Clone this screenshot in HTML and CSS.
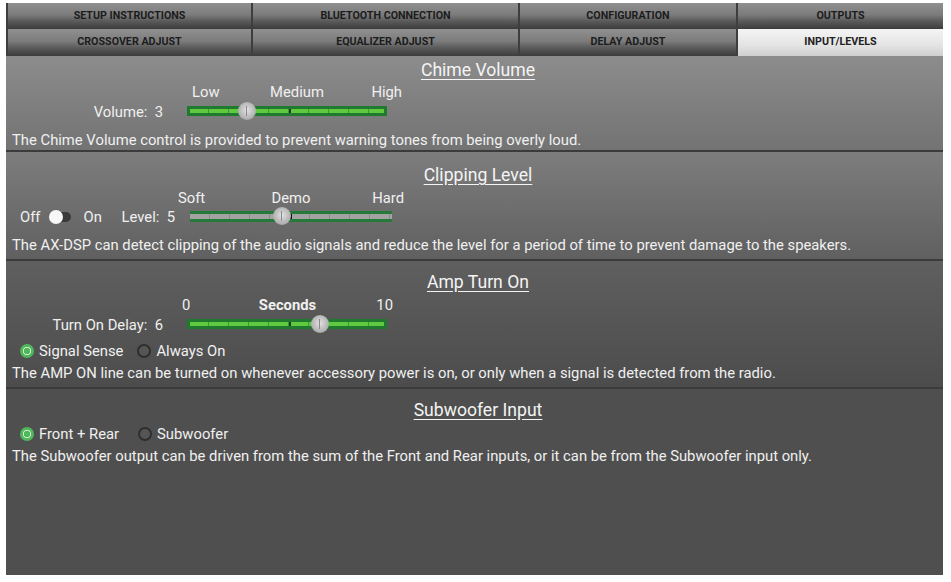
FILE: index.html
```html
<!DOCTYPE html>
<html>
  <head>
    <title>AX-DSP - Input/Levels</title>
    <link rel="stylesheet" href="styles.css">
  </head>
  <body>
    <div class="panel">

      <!--TABS-->
      <div class="tabs">
        <div class="tab">SETUP INSTRUCTIONS</div>
        <div class="tab">BLUETOOTH CONNECTION</div>
        <div class="tab">CONFIGURATION</div>
        <div class="tab">OUTPUTS</div>
        <div class="tab">CROSSOVER ADJUST</div>
        <div class="tab">EQUALIZER ADJUST</div>
        <div class="tab">DELAY ADJUST</div>
        <div class="tab tabActive">INPUT/LEVELS</div>
      </div>

      <!--CHIME VOLUME-->
      <section class="block chimeBlock">
        <h2 class="heading">Chime Volume</h2>
        <div class="ctl">
          <div></div>
          <div class="scale scaleChime"><span>Low</span><span>Medium</span><span>High</span></div>
          <div class="ctlLabel">Volume:&nbsp; 3</div>
          <div class="slider"><div class="thumb" style="left: 29.5%"></div></div>
        </div>
        <p class="desc">The Chime Volume control is provided to prevent warning tones from being overly loud.</p>
      </section>

      <!--CLIPPING LEVEL-->
      <section class="block clipBlock">
        <h2 class="heading">Clipping Level</h2>
        <div class="ctl ctlClip">
          <div></div>
          <div class="scale scaleClip"><span>Soft</span><span>Demo</span><span>Hard</span></div>
          <div class="clipLabel">
            <span>Off</span>
            <span class="toggle"><span class="knob"></span></span>
            <span class="onText">On</span>
            <span class="levelText">Level:&nbsp; 5</span>
          </div>
          <div class="slider sliderOff"><div class="thumb" style="left: 45.5%"></div></div>
        </div>
        <p class="desc">The AX-DSP can detect clipping of the audio signals and reduce the level for a period of time to prevent damage to the speakers.</p>
      </section>

      <!--AMP TURN ON-->
      <section class="block ampBlock">
        <h2 class="heading">Amp Turn On</h2>
        <div class="ctl">
          <div></div>
          <div class="scale scaleAmp"><span>0</span><span class="bold">Seconds</span><span>10</span></div>
          <div class="ctlLabel">Turn On Delay:&nbsp; 6</div>
          <div class="slider"><div class="thumb" style="left: 67%"></div></div>
        </div>
        <div class="radios">
          <label class="radio"><span class="dot checked"></span>Signal Sense</label>
          <label class="radio"><span class="dot"></span>Always On</label>
        </div>
        <p class="desc descAmp">The AMP ON line can be turned on whenever accessory power is on, or only when a signal is detected from the radio.</p>
      </section>

      <!--SUBWOOFER INPUT-->
      <section class="block subBlock">
        <h2 class="heading">Subwoofer Input</h2>
        <div class="radios radiosSub">
          <label class="radio"><span class="dot checked"></span>Front + Rear</label>
          <label class="radio"><span class="dot"></span>Subwoofer</label>
        </div>
        <p class="desc descAmp">The Subwoofer output can be driven from the sum of the Front and Rear inputs, or it can be from the Subwoofer input only.</p>
      </section>

    </div>
  </body>
</html>
```

FILE: styles.css
```css
body{
  margin: 0;
  background-color: white;
  font-family: Roboto, "Liberation Sans", sans-serif;
  color: #f0f0f0;
}

.panel{
  width: 937px;
  height: 572px;
  margin: 3px 0 0 6px;
  background-color: #4f4f4f;
  display: flex;
  flex-direction: column;
}

/* Tabs on top */
.tabs{
  display: grid;
  grid-template-columns: 245px 267px 218px 207px;
}

.tab{
  height: 26px;
  line-height: 26px;
  text-align: center;
  font-size: 10.7px;
  font-weight: bold;
  color: #1c1c1c;
  background: linear-gradient(#909090, #7c7c7c 45%, #5a5a5a 70%, #3c3c3c);
  border-left: 2px solid #3e3e3e;
  box-sizing: border-box;
}

.tab:nth-child(n+5){
  height: 27px;
}

.tabActive{
  background: linear-gradient(#f4f4f4, #e4e4e4 60%, #cfcfcf);
  color: #222;
}

/* Sections */
.block{
  padding-left: 7px;
  box-sizing: border-box;
  border-bottom: 2px solid #3b3b3b;
}

.chimeBlock{
  height: 96px;
  padding-top: 4px;
  background: linear-gradient(#8c8c8c, #737373);
}

.clipBlock{
  height: 109px;
  padding-top: 13px;
  background: linear-gradient(#7d7d7d, #606060);
}

.ampBlock{
  height: 128px;
  padding-top: 11px;
  background: linear-gradient(#5f5f5f, #4c4c4c);
}

.subBlock{
  flex: 1;
  padding-top: 11px;
  border-bottom: none;
  background-color: #4f4f4f;
}

.heading{
  margin: 0;
  font-size: 17.6px;
  font-weight: normal;
  line-height: 20px;
  text-align: center;
  text-decoration: underline;
  text-underline-offset: 3px;
  color: #f4f4f4;
}

/* Slider controls */
.ctl{
  display: grid;
  grid-template-columns: 174px 200px;
  margin-top: 4px;
  font-size: 14.8px;
}

.ctlClip{
  grid-template-columns: 177px 202px;
  margin-top: 5px;
}

.ampBlock .ctl{
  margin-top: 5px;
}

.scale{
  display: grid;
  grid-template-columns: 1fr auto 1fr;
  line-height: 16px;
}

.scale span:first-child{
  justify-self: start;
}

.scale span:last-child{
  justify-self: end;
}

.scaleChime{
  padding-left: 5px;
  margin-right: -15px;
}

.scaleClip{
  margin-left: -12px;
  margin-right: -12px;
}

.scaleAmp{
  margin-left: -5px;
  margin-right: -6px;
}

.bold{
  font-weight: bold;
}

.ctlLabel{
  text-align: right;
  padding-right: 24px;
  line-height: 22px;
  padding-top: 1px;
}

.slider{
  position: relative;
  align-self: center;
  height: 10px;
  margin-top: -2px;
  box-sizing: border-box;
  border: 3px solid #1f7a30;
  background-color: #61c940;
  background-image:
    linear-gradient(90deg, transparent 99px, #173f1c 99px, #173f1c 101px, transparent 101px),
    repeating-linear-gradient(90deg, transparent 0 18px, #3c9a36 18px 19px, transparent 19px 20px);
}

.sliderOff{
  height: 11px;
  border-width: 3px 0;
  border-color: #247a36;
  background-color: #a3a3a3;
  background-image:
    linear-gradient(90deg, transparent 100px, #111 100px, #111 102px, transparent 102px),
    repeating-linear-gradient(90deg, transparent 0 19px, #8b8b8b 19px 20px);
}

.thumb{
  position: absolute;
  top: -7px;
  width: 18px;
  height: 18px;
  margin-left: -9px;
  border-radius: 50%;
  background: radial-gradient(circle at 50% 45%, #e2e2e2, #b4b4b4 60%, #8f8f8f);
}

.thumb::after{
  content: "";
  position: absolute;
  left: 8px;
  top: 4px;
  width: 1px;
  height: 10px;
  background-color: #8a8a8a;
}

/* Clipping on/off row */
.clipLabel{
  display: flex;
  align-items: center;
  padding-left: 7px;
  line-height: 22px;
}

.toggle{
  position: relative;
  width: 18px;
  height: 10px;
  margin-left: 13px;
  border-radius: 5px;
  background-color: #3a3a3a;
}

.knob{
  position: absolute;
  left: -4px;
  top: -2px;
  width: 14px;
  height: 14px;
  border-radius: 50%;
  background-color: #f7f7f7;
}

.onText{
  margin-left: 12px;
}

.levelText{
  margin-left: auto;
  padding-right: 15px;
}

/* Radio buttons */
.radios{
  display: flex;
  gap: 14px;
  margin-top: 6px;
  padding-left: 7px;
  font-size: 14.8px;
  line-height: 18px;
}

.radiosSub{
  margin-top: 5px;
  gap: 19px;
}

.radio{
  display: flex;
  align-items: center;
}

.dot{
  width: 10px;
  height: 10px;
  margin-right: 5px;
  border-radius: 50%;
  border: 2px solid #2e2e2e;
  background-color: #555;
}

.dot.checked{
  border-color: #4fb85a;
  background: radial-gradient(circle, #4fb85a 0 3px, #cfe9cf 3.5px 4px, #4fb85a 4.5px);
}

.desc{
  margin: 8px 0 0 -1px;
  font-size: 14.8px;
  line-height: 18px;
}

.clipBlock .desc{
  margin-top: 8px;
}

.descAmp{
  margin-top: 4px;
}
```
